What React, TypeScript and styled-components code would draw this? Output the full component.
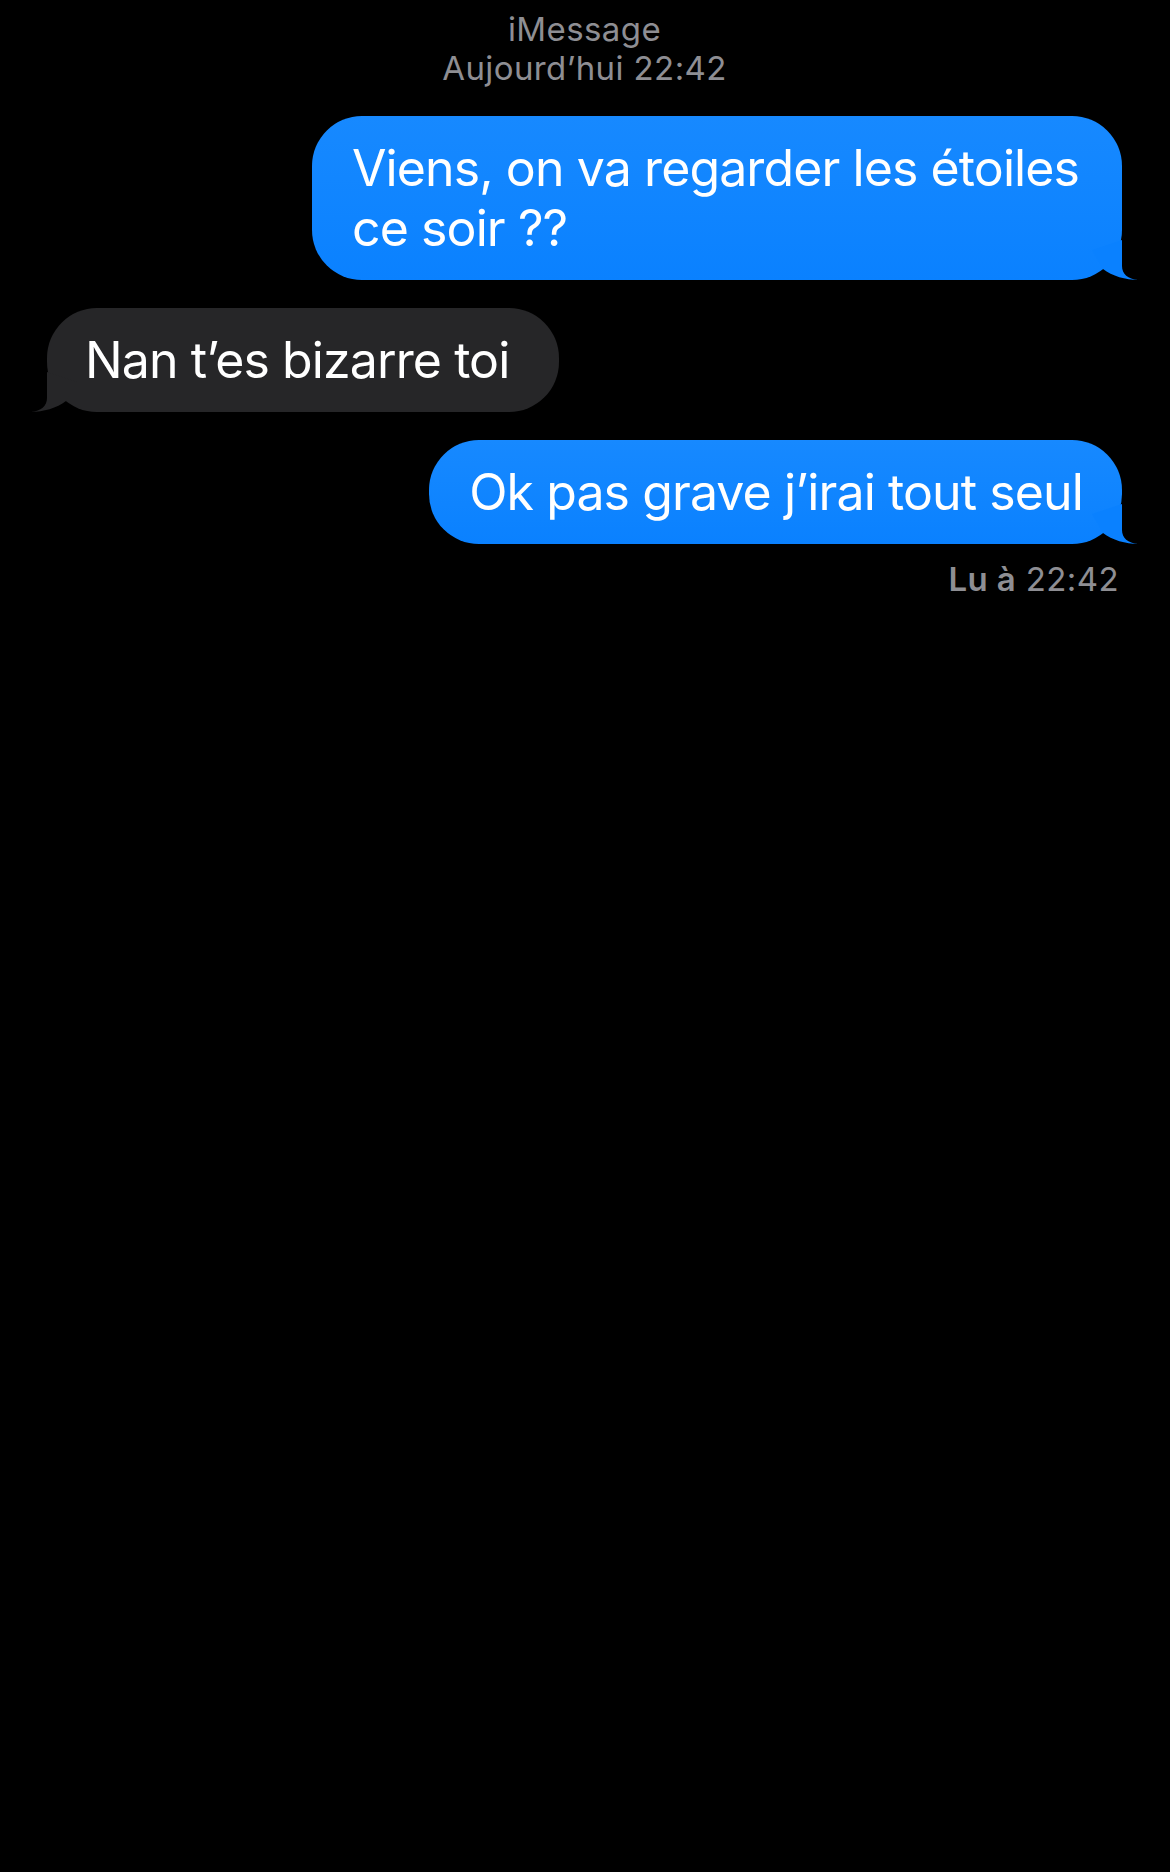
import React from 'react';
import styled, { createGlobalStyle } from 'styled-components';

const GlobalStyle = createGlobalStyle`
  html, body {
    margin: 0;
    padding: 0;
    background: #000;
  }
  body {
    font-family: Inter, "Noto Sans", "Liberation Sans", sans-serif;
    -webkit-font-smoothing: antialiased;
  }
`;

type Side = 'me' | 'them';

const Screen = styled.div`
  width: 1170px;
  min-height: 1872px;
  background: #000;
  display: flex;
  flex-direction: column;
  padding: 10px 48px 0 47px;
  box-sizing: border-box;
`;

const Header = styled.div`
  display: flex;
  flex-direction: column;
  align-items: center;
  color: #8e8e93;
  font-size: 33px;
  line-height: 39px;
  letter-spacing: 0.4px;
  margin-bottom: 28px;
`;

const Thread = styled.div`
  display: flex;
  flex-direction: column;
  gap: 28px;
`;

const Row = styled.div<{ $side: Side }>`
  display: flex;
  justify-content: ${({ $side }) => ($side === 'me' ? 'flex-end' : 'flex-start')};
`;

const Bubble = styled.div<{ $side: Side }>`
  position: relative;
  max-width: 810px;
  box-sizing: border-box;
  padding: ${({ $side }) => ($side === 'me' ? '22px 39px 22px 40px' : '22px 50px 22px 38px')};
  border-radius: 50px;
  font-size: 50px;
  line-height: 60px;
  letter-spacing: -0.9px;
  color: #fff;
  background: ${({ $side }) =>
    $side === 'me' ? 'linear-gradient(#1789ff, #0a81ff)' : '#262628'};
`;

const TailSvg = styled.svg<{ $side: Side }>`
  position: absolute;
  bottom: 0;
  width: 66px;
  height: 40px;
  ${({ $side }) => ($side === 'me' ? 'right: -16px;' : 'left: -16px; transform: scaleX(-1);')}
`;

const Receipt = styled.div`
  align-self: flex-end;
  margin-top: 16px;
  padding-right: 3px;
  font-size: 33px;
  line-height: 39px;
  letter-spacing: 0.4px;
  color: #8e8e93;
`;

const ReceiptLabel = styled.span`
  font-weight: 600;
`;

const Tail: React.FC<{ side: Side }> = ({ side }) => (
  <TailSvg $side={side} viewBox="0 0 66 40">
    <path
      d="M50 0 L50 26 C50 34 56 39 66 40 C54 40 40 36 31 29 L20 10 Z"
      fill={side === 'me' ? '#0a81ff' : '#262628'}
    />
  </TailSvg>
);

const messages: { side: Side; text: string }[] = [
  { side: 'me', text: 'Viens, on va regarder les étoiles ce soir ??' },
  { side: 'them', text: 'Nan t’es bizarre toi' },
  { side: 'me', text: 'Ok pas grave j’irai tout seul' },
];

const App: React.FC = () => {
  return (
    <>
      <GlobalStyle />
      <Screen>
        <Header>
          <span>iMessage</span>
          <span>Aujourd’hui 22:42</span>
        </Header>
        <Thread>
          {messages.map((m, i) => (
            <Row key={i} $side={m.side}>
              <Bubble $side={m.side}>
                {m.text}
                <Tail side={m.side} />
              </Bubble>
            </Row>
          ))}
        </Thread>
        <Receipt>
          <ReceiptLabel>Lu à</ReceiptLabel> 22:42
        </Receipt>
      </Screen>
    </>
  );
};

export default App;
